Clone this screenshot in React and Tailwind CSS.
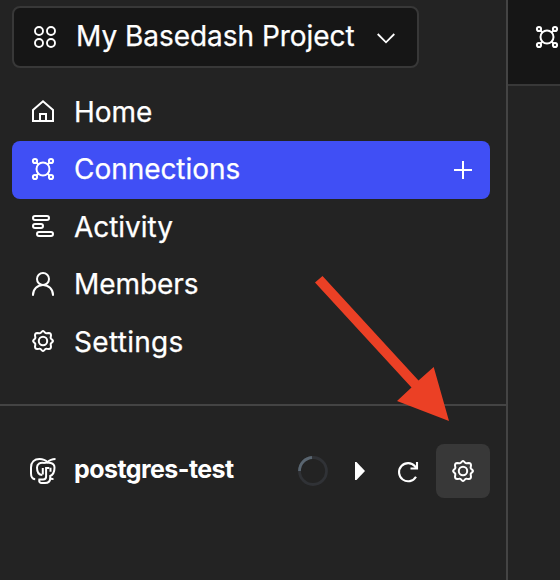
import React from 'react';

const Icon = ({ children, size = 22, sw = 2, className = '' }) => (
  <svg
    width={size}
    height={size}
    viewBox={`0 0 ${size} ${size}`}
    fill="none"
    stroke="#fff"
    strokeWidth={sw}
    className={`shrink-0 overflow-visible ${className}`}
  >
    {children}
  </svg>
);

const GridIcon = () => (
  <Icon sw={1.9}>
    <circle cx="5" cy="5" r="4" />
    <circle cx="17" cy="5" r="4" />
    <circle cx="5" cy="17" r="4" />
    <circle cx="17" cy="17" r="4" />
  </Icon>
);

const HomeIcon = () => (
  <Icon>
    <path d="M1 10 11 1.300l10 8.700v11H1z" />
    <path d="M8 21v-7h6v7" />
  </Icon>
);

const NodesIcon = () => (
  <Icon>
    <circle cx="11" cy="11" r="6.500" />
    <circle cx="3" cy="3" r="2.100" />
    <circle cx="19" cy="3" r="2.100" />
    <circle cx="3" cy="19" r="2.100" />
    <circle cx="19" cy="19" r="2.100" />
    <path d="m4.500 4.500 2 2m11-2-2 2m-11 11 2-2m11 2-2-2" />
  </Icon>
);

const ActivityIcon = () => (
  <Icon>
    <rect x="1" y="1" width="16" height="4" rx="2" />
    <rect x="1" y="9" width="10" height="4" rx="2" />
    <rect x="5" y="17" width="16" height="4" rx="2" />
  </Icon>
);

const MemberIcon = () => (
  <Icon>
    <circle cx="11" cy="6" r="6" />
    <path d="M1 22.800v-.8C1 16.200 5.500 12 11 12s10 4.200 10 10v.8" />
  </Icon>
);

const GearIcon = () => (
  <Icon>
    <circle cx="11" cy="11" r="4.200" />
    <path
      strokeLinejoin="round"
      d="M9.900 1.600Q11 .5 12.100 1.600L13.300 2.900Q13.900 3.500 14.700 3.300L16.900 3Q18.800 3 19 5.100L18.700 7.300Q18.500 8.100 19.100 8.700L20.400 9.900Q21.500 11 20.400 12.100L19.100 13.300Q18.500 13.900 18.700 14.700L19 16.900Q18.800 19 16.900 19L14.700 18.700Q13.900 18.500 13.300 19.100L12.100 20.400Q11 21.500 9.900 20.400L8.700 19.100Q8.100 18.500 7.300 18.700L5.100 19Q3.200 19 3 16.900L3.300 14.700Q3.500 13.900 2.900 13.300L1.600 12.100Q.5 11 1.600 9.900L2.900 8.700Q3.500 8.100 3.300 7.300L3 5.100Q3.200 3 5.100 3L7.300 3.300Q8.100 3.500 8.700 2.900Z"
    />
  </Icon>
);

const PostgresIcon = () => (
  <Icon size={26} className="-ml-0.5">
    <path d="M5.200 21.200C2.500 21 1 19 1 15.500V9.500C1 4 4.500 1 9.500 1c3.500 0 6 1 8 3.200C19.500 2 22 1 25.500 1" />
    <path d="M14 4.900C10 4.400 7 5.500 7 9.500c0 4 1.500 7.500 5.300 7.500" />
    <path d="M14 4.900c4-.7 10.500-.5 10.500 4.600 0 4-1.800 7.500-4.300 8.500v2c0 3-2 5-5.200 5h-3.200c-2 0-3-1.300-2.500-3.600h3.800c2.100 0 3-1 3-3V10h3.200" />
    <path d="M12.800 10v6.500M20.500 9.800v4M20.300 20.300c1.200.8 2.200.8 3.200.3" />
  </Icon>
);

const items = [
  { label: 'Home', icon: HomeIcon },
  { label: 'Connections', icon: NodesIcon, active: true },
  { label: 'Activity', icon: ActivityIcon },
  { label: 'Members', icon: MemberIcon },
  { label: 'Settings', icon: GearIcon, wide: true },
];

export default function App() {
  return (
    <div className="relative flex h-[580px] w-[560px] overflow-hidden bg-[#232323] font-['Inter',sans-serif] text-[28px] text-white [-webkit-text-stroke:0.25px_#fff]">
      <aside className="flex w-[508px] shrink-0 flex-col border-r-2 border-[#444]">
        <div className="h-[404px] shrink-0 pl-3 pr-4 pt-1.5">
          <button className="flex h-[62px] w-[407px] items-center rounded-lg border-2 border-[#383838] bg-[#161616] pl-[20px]">
            <GridIcon />
            <span className="-mt-0.5 ml-[20px] w-[280px] whitespace-nowrap text-left tracking-[-0.03px]">
              My Basedash Project
            </span>
            <Icon size={18} sw={1.8} className="ml-[21px] mt-0.5">
              <path d="m.7 5 8.300 8.300L17.300 5" />
            </Icon>
          </button>
          <nav className="mt-[15.5px] flex flex-col">
            {items.map(({ label, icon: Glyph, active, wide }) => (
              <a
                key={label}
                className={`flex h-[57.5px] items-center rounded-lg pl-5 ${active ? 'bg-[#404ff5]' : ''}`}
              >
                <span className="-mt-[2.5px] shrink-0">
                  <Glyph />
                </span>
                <span className={`-mt-px ml-5 flex-1 ${wide ? 'tracking-[0.3px]' : 'tracking-[-0.050px]'}`}>
                  {label}
                </span>
                {active && (
                  <Icon size={18} sw={2} className="mr-[18px]">
                    <path d="M9 0v18M0 9h18" />
                  </Icon>
                )}
              </a>
            ))}
          </nav>
        </div>
        <div className="h-0.5 shrink-0 bg-[#444]" />
        <div className="mt-[38px] flex h-[54px] items-center pl-8 pr-4">
          <PostgresIcon />
          <span className="-mt-[3px] ml-[18px] w-[224px] text-[25px] font-bold leading-none tracking-[-0.560px] [-webkit-text-stroke:0]">
            postgres-test
          </span>
          <svg width="30" height="30" viewBox="0 0 30 30" fill="none" strokeWidth="2.800" className="shrink-0">
            <circle cx="15" cy="15" r="13.500" stroke="#303236" />
            <path d="M1.500 15A13.500 13.500 0 0 1 14 1.500" stroke="#596570" />
          </svg>
          <svg width="10" height="18" viewBox="0 0 10 18" className="ml-[27px] shrink-0">
            <path d="M0 0h1.500L10 9l-8.500 9H0z" fill="#fff" />
          </svg>
          <Icon size={20} sw={2.1} className="ml-[33px] mt-0.5">
            <path d="M18 14.800A9.100 9.100 0 1 1 17 4.200l2 2M19 0v6.500h-6.500" />
          </Icon>
          <button className="ml-[18px] flex h-[54px] w-[54px] shrink-0 items-center justify-center rounded-lg bg-[#383838]">
            <GearIcon />
          </button>
        </div>
      </aside>
      <main className="min-w-0 flex-1">
        <div className="flex h-[86px] items-start border-b-2 border-[#383838] bg-[#161616] pl-7 pt-[26px]">
          <NodesIcon />
        </div>
      </main>
      <svg className="absolute left-[300px] top-[260px]" width="170" height="170" viewBox="0 0 170 170">
        <path
          d="M15 22.500 22.500 16 118.500 120.500 133.700 107 149 161 97 141 111.500 127.500z"
          fill="#eb4025"
        />
      </svg>
    </div>
  );
}
